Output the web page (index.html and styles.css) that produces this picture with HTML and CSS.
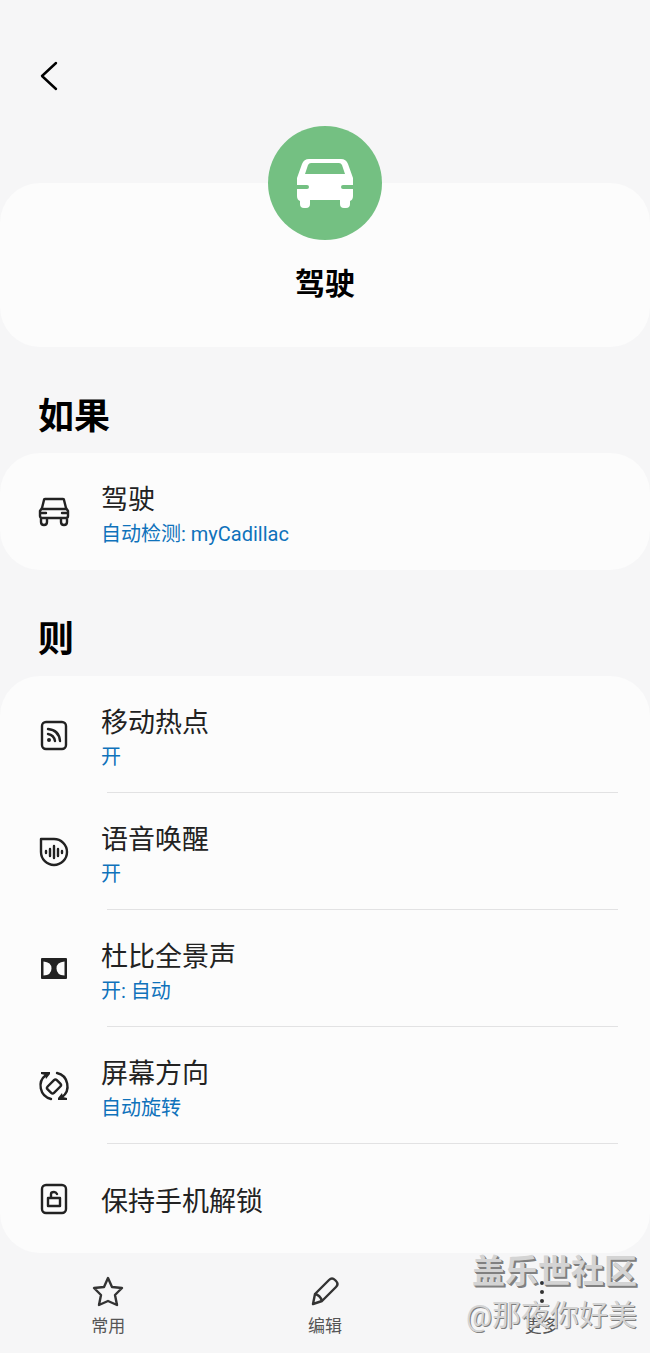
FILE: index.html
```html
<!DOCTYPE html>
<html lang="zh-CN">
<head>
  <meta charset="UTF-8">
  <meta name="viewport" content="width=device-width, initial-scale=1">
  <title>驾驶</title>
  <link rel="stylesheet" href="styles.css">
</head>
<body>
  <header class="topbar">
    <button class="back-btn" aria-label="返回">
      <svg width="32" height="32" viewBox="0 0 32 32"><path d="M24 3 L10 16 L24 29"/></svg>
    </button>
  </header>

  <main>
    <!-- Routine name -->
    <section class="card hero">
      <div class="hero-icon">
        <svg width="114" height="114" viewBox="0 0 114 114">
          <path fill="#fff" fill-rule="evenodd" d="M41 33 H73 Q78 33 80 38 L85 52 V70 Q85 74 82 75 V78 Q82 82 78 82 H76 Q72 82 72 78 V74 H42 V78 Q42 82 38 82 H36 Q32 82 32 78 V75 Q29 74 29 70 V52 L34 38 Q36 33 41 33 Z M43 37 Q41 37 40 39 L37 48 H77 L74 39 Q73 37 71 37 Z"/>
          <path stroke="#74c082" stroke-width="4" stroke-linecap="round" d="M27 61 H39 M75 61 H88"/>
        </svg>
      </div>
      <h1>驾驶</h1>
    </section>

    <h2>如果</h2>
    <ul class="card list">
      <li class="row">
        <svg class="icon" width="36" height="36" viewBox="0 0 36 36">
          <path d="M9 5 H27 Q28 5 28 6 L30 14 L32 17 V22 Q32 24 30 24 H6 Q4 24 4 22 V17 L6 14 L8 6 Q8 5 9 5 Z M6 15 H30 M5 19 H10 M31 19 H26 M5 24 V28 Q5 31 8 31 Q11 31 11 28 V24 M25 24 V28 Q25 31 28 31 Q31 31 31 28 V24"/>
        </svg>
        <div class="text">
          <h3>驾驶</h3>
          <p>自动检测: myCadillac</p>
        </div>
      </li>
    </ul>

    <h2>则</h2>
    <ul class="card list">
      <li class="row">
        <svg class="icon" width="36" height="36" viewBox="0 0 36 36">
          <rect x="6" y="5" width="24" height="27" rx="4"/>
          <path d="M12 12 Q23 13 24 24 M12 17 Q18 18 19 24"/>
          <circle class="solid" cx="13" cy="23" r="2"/>
        </svg>
        <div class="text">
          <h3>移动热点</h3>
          <p>开</p>
        </div>
      </li>
      <li class="row">
        <svg class="icon" width="36" height="36" viewBox="0 0 36 36">
          <path d="M5 5 H18 A13 13 0 1 1 5 18 Z M10 17 V19 M14 15 V22 M18 12 V24 M22 15 V22 M26 17 V19"/>
        </svg>
        <div class="text">
          <h3>语音唤醒</h3>
          <p>开</p>
        </div>
      </li>
      <li class="row">
        <svg class="icon" width="36" height="36" viewBox="0 0 36 36">
          <path class="solid" fill-rule="evenodd" d="M6 7 H30 Q31 7 31 8 V27 Q31 28 30 28 H6 Q5 28 5 27 V8 Q5 7 6 7 Z M7.5 10.5 V24.5 Q15.5 24 15.5 17.5 Q15.5 11 7.5 10.5 Z M28.5 10.5 V24.5 Q20.5 24 20.5 17.5 Q20.5 11 28.5 10.5 Z"/>
        </svg>
        <div class="text">
          <h3>杜比全景声</h3>
          <p>开: 自动</p>
        </div>
      </li>
      <li class="row">
        <svg class="icon" width="36" height="36" viewBox="0 0 36 36">
          <rect x="13.5" y="12" width="9" height="13" rx="2" transform="rotate(45 18 18.5)"/>
          <path d="M15 31 A13.5 13.5 0 0 1 10 7 M21 5 A13.5 13.5 0 0 1 26 29"/>
          <path class="solid" d="M5 4 H14 V6 L10 11 L9 7 L5 6 Z M31 32 H22 V30 L26 25 L27 29 L31 30 Z"/>
        </svg>
        <div class="text">
          <h3>屏幕方向</h3>
          <p>自动旋转</p>
        </div>
      </li>
      <li class="row single">
        <svg class="icon" width="36" height="36" viewBox="0 0 36 36">
          <rect x="6" y="4" width="24" height="28" rx="4"/>
          <path d="M12 17 H24 V25 H12 Z M15 17 V13 Q15 11 18 11 Q20 11 21 13"/>
        </svg>
        <div class="text">
          <h3>保持手机解锁</h3>
        </div>
      </li>
    </ul>
  </main>

  <nav class="bottom-bar">
    <button>
      <svg width="36" height="36" viewBox="0 0 36 36"><path d="M18 4 L22 13 L32 14 L25 21 L27 31 L18 27 L9 31 L11 21 L4 14 L14 13 Z"/></svg>
      常用
    </button>
    <button>
      <svg width="36" height="36" viewBox="0 0 36 36"><path d="M6 30 L8 20 L22 6 Q25 3 28 6 L29 7 Q32 10 29 13 L15 27 Z M8 20 Q13 21 15 27"/></svg>
      编辑
    </button>
    <button>
      <svg width="36" height="36" viewBox="0 0 36 36"><g class="dots"><circle cx="18" cy="9" r="2"/><circle cx="18" cy="18" r="2"/><circle cx="18" cy="27" r="2"/></g></svg>
      更多
    </button>
    <div class="watermark">
      <strong>盖乐世社区</strong>
      <span>@那夜你好美</span>
    </div>
  </nav>
</body>
</html>
```
FILE: styles.css
```css
* {
  box-sizing: border-box;
}
body {
  margin: 0;
  background: #f6f6f7;
  color: #222;
  font-family: Roboto, "Noto Sans CJK SC", sans-serif;
}
h1, h2, h3, p, ul {
  margin: 0;
  padding: 0;
}
button {
  padding: 0;
  border: none;
  background: none;
  font-family: inherit;
  cursor: pointer;
}
svg {
  display: block;
  fill: none;
  stroke-linecap: round;
  stroke-linejoin: round;
}
.topbar {
  padding: 60px 32px 0;
}
.back-btn {
  display: block;
}
.back-btn svg {
  stroke: #000;
  stroke-width: 2.4;
}
.card {
  background: #fcfcfc;
  border-radius: 40px;
}
/* top padding keeps room for the half of the icon above the card */
main {
  padding-top: 91px;
}
.hero {
  padding-bottom: 41px;
  display: flex;
  flex-direction: column;
  align-items: center;
}
.hero-icon {
  margin-top: -57px;
  border-radius: 50%;
  background: #74c082;
}
h1 {
  margin-top: 22px;
  font-size: 30px;
  line-height: 44px;
  color: #000;
}
h2 {
  padding: 44px 38px 9px;
  font-size: 36px;
  line-height: 53px;
  color: #000;
}

/* Condition and action rows */
.list {
  list-style: none;
}
.row {
  display: flex;
  align-items: center;
  height: 117px;
  padding: 0 32px 0 36px;
  gap: 29px;
}
.icon {
  flex: none;
  stroke: #222;
  stroke-width: 2.4;
}
.solid {
  fill: #222;
  stroke: none;
}
.text {
  position: relative;
  flex: 1;
  height: 100%;
  padding-top: 6px;
  display: flex;
  flex-direction: column;
  justify-content: center;
  gap: 2px;
}
.row + .row .text::before {
  content: "";
  position: absolute;
  top: -1px;
  left: 6px;
  right: 0;
  height: 1px;
  background: #e2e2e3;
}
h3 {
  font-size: 27px;
  line-height: 36px;
  font-weight: 400;
}
.text p {
  font-size: 20px;
  line-height: 28px;
  color: #0f72bb;
}
.single {
  height: 109px;
}

.bottom-bar {
  position: relative;
  display: grid;
  grid-template-columns: repeat(3, 1fr);
  padding: 21px 0 15px;
}
.bottom-bar button {
  display: flex;
  flex-direction: column;
  align-items: center;
  gap: 4px;
  font-size: 17px;
  line-height: 24px;
  color: #555;
}
.bottom-bar svg {
  stroke: #333;
  stroke-width: 2.4;
}
.bottom-bar .dots {
  fill: #333;
  stroke: none;
}
.watermark {
  position: absolute;
  right: 13px;
  bottom: 15px;
  display: flex;
  flex-direction: column;
  align-items: flex-end;
  color: #d4d4d4;
  text-shadow: 1px 1px 0 #808080;
  pointer-events: none;
}
.watermark strong {
  font-size: 33px;
  line-height: 44px;
  text-shadow: 1px 1px 0 #808080, 2px 2px 0 #808080;
}
.watermark span {
  font-size: 29px;
  line-height: 44px;
}
```
